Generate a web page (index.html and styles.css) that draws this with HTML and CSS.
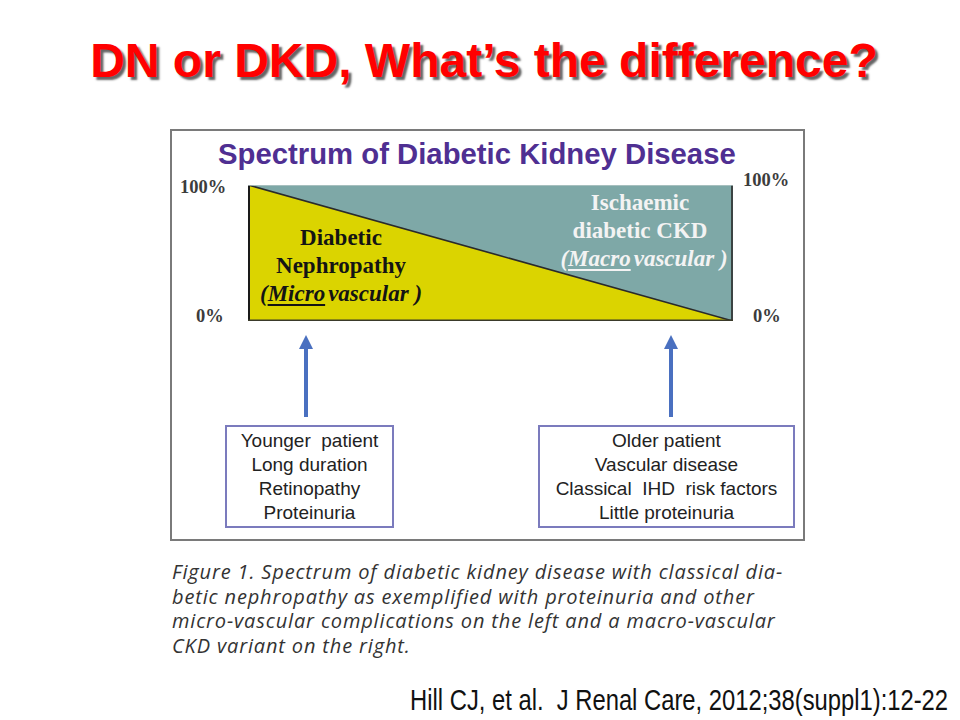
FILE: index.html
```html
<!DOCTYPE html>
<html lang="en">
<head>
<meta charset="utf-8">
<title>DN or DKD, What’s the difference?</title>
<link rel="stylesheet" href="styles.css">
</head>
<body>
<div class="slide">
  <h1 class="title">DN or DKD, What’s the difference?</h1>

  <div class="figure">
    <div class="fig-title">Spectrum of Diabetic Kidney Disease</div>

    <div class="chart-row">
      <div class="axis axis-left">
        <span class="pct pct-top">100%</span>
        <span class="pct pct-bottom">0%</span>
      </div>
      <div class="chart">
        <svg class="chart-svg" width="485" height="136" viewBox="0 0 485 136">
          <polygon points="0,0 485,0 485,136" fill="#7ea8a7"/>
          <polygon points="0,0 0,136 485,136" fill="#dbd400"/>
          <line x1="0" y1="0" x2="485" y2="136" stroke="#2a2a2a" stroke-width="1.6"/>
          <line x1="1" y1="0" x2="1" y2="136" stroke="#1a1a1a" stroke-width="2"/>
          <line x1="484" y1="0" x2="484" y2="136" stroke="#2a2a2a" stroke-width="1.6"/>
          <line x1="0" y1="135.3" x2="485" y2="135.3" stroke="#3a3a2a" stroke-width="1.4"/>
          <line x1="0" y1="0.4" x2="485" y2="0.4" stroke="#b8c8c8" stroke-width="0.8"/>
        </svg>
        <div class="lbl lbl-left">
          <div>Diabetic</div>
          <div>Nephropathy</div>
          <div class="it">(<u>Micro</u>vascular )</div>
        </div>
        <div class="lbl lbl-right">
          <div>Ischaemic</div>
          <div>diabetic CKD</div>
          <div class="it it-shift">(<u>Macro</u>vascular )</div>
        </div>
      </div>
      <div class="axis axis-right">
        <span class="pct pct-top">100%</span>
        <span class="pct pct-bottom">0%</span>
      </div>
    </div>

    <div class="cols">
      <div class="col col-left">
        <svg class="arrow" width="20" height="104" viewBox="0 0 20 104">
          <polygon points="10,14 3,28 17,28" fill="#4a70c0"/>
          <rect x="8" y="26" width="4" height="70" fill="#4a70c0"/>
        </svg>
        <div class="box">
          <div>Younger&nbsp; patient</div>
          <div>Long duration</div>
          <div>Retinopathy</div>
          <div>Proteinuria</div>
        </div>
      </div>
      <div class="col col-right">
        <svg class="arrow" width="20" height="104" viewBox="0 0 20 104">
          <polygon points="10,14 3,28 17,28" fill="#4a70c0"/>
          <rect x="8" y="26" width="4" height="70" fill="#4a70c0"/>
        </svg>
        <div class="box">
          <div>Older patient</div>
          <div>Vascular disease</div>
          <div>Classical&nbsp; IHD&nbsp; risk factors</div>
          <div>Little proteinuria</div>
        </div>
      </div>
    </div>
  </div>

  <p class="caption">Figure 1. Spectrum of diabetic kidney disease with classical dia-<br>betic nephropathy as exemplified with proteinuria and other<br>micro-vascular complications on the left and a macro-vascular<br>CKD variant on the right.</p>

  <p class="cite"><span class="cite-text">Hill CJ, et al.&nbsp; J Renal Care, 2012;38(suppl1):12-22</span></p>
</div>
</body>
</html>
```

FILE: styles.css
```css
html, body {
  margin: 0;
  padding: 0;
  background: #ffffff;
}

.slide {
  width: 960px;
  height: 720px;
  overflow: hidden;
  display: flex;
  flex-direction: column;
  background: #ffffff;
}

.title {
  margin: 33px 0 0 0;
  font-family: "Liberation Sans", Arial, sans-serif;
  font-weight: bold;
  font-size: 48px;
  line-height: 56px;
  color: #ff0000;
  text-align: center;
  padding-left: 8px;
  text-shadow: 3px 3px 2px rgba(50, 50, 50, 0.75);
}

.figure {
  margin: 40px 0 0 170px;
  width: 631px;
  height: 408px;
  border: 2px solid #7a7a7a;
  background: #ffffff;
  display: flex;
  flex-direction: column;
}

.fig-title {
  padding: 6px 0 0 46px;
  font-family: "Liberation Sans", Arial, sans-serif;
  font-weight: bold;
  font-size: 29.3px;
  line-height: 34px;
  color: #4f2f92;
}

.chart-row {
  display: grid;
  grid-template-columns: 76px 485px 1fr;
  height: 150px;
}

.axis {
  display: flex;
  flex-direction: column;
  font-family: "Liberation Serif", "Times New Roman", serif;
  font-weight: bold;
  font-size: 18.5px;
  line-height: 20px;
  color: #3c3c3c;
}

.axis-left .pct-top {
  margin-top: 6px;
  padding-left: 8px;
}

.axis-left .pct-bottom {
  margin-top: auto;
  margin-bottom: -5px;
  padding-left: 24px;
}

.axis-right .pct-top {
  margin-top: -1px;
  padding-left: 10px;
}

.axis-right .pct-bottom {
  margin-top: auto;
  margin-bottom: -5px;
  padding-left: 20px;
}

.chart {
  position: relative;
  margin-top: 14px;
  width: 485px;
  height: 136px;
}

.chart-svg {
  display: block;
}

.lbl {
  position: absolute;
  font-family: "Liberation Serif", "Times New Roman", serif;
  font-weight: bold;
  font-size: 23px;
  line-height: 28px;
  text-align: center;
}

.lbl .it {
  font-style: italic;
}

.lbl .it-shift {
  padding-left: 8px;
}

.lbl u {
  text-decoration-thickness: 2px;
  text-underline-offset: 3px;
  margin-right: 3px;
}

.lbl-left {
  left: 0;
  top: 39px;
  width: 186px;
  color: #141414;
}

.lbl-right {
  left: 292px;
  top: 4px;
  width: 200px;
  color: #f3f3f3;
}

.cols {
  display: flex;
  padding-left: 53px;
  gap: 144px;
}

.col {
  display: flex;
  flex-direction: column;
  align-items: center;
}

.col-left {
  width: 169px;
}

.col-right {
  width: 257px;
}

.arrow {
  display: block;
}

.col-left .arrow {
  margin-left: -7px;
}

.col-right .arrow {
  margin-left: 9px;
}

.box {
  align-self: stretch;
  border: 2px solid #7b7bbd;
  padding: 2px 0 1px 0;
  font-family: "Liberation Sans", Arial, sans-serif;
  font-size: 19px;
  line-height: 24px;
  color: #222222;
  text-align: center;
}

.caption {
  margin: 19px 0 0 172px;
  font-family: "Open Sans", "Noto Sans", sans-serif;
  font-style: italic;
  font-size: 20px;
  letter-spacing: 0.85px;
  line-height: 24.5px;
  color: #333333;
}

.cite {
  margin: 26px 12px 0 0;
  text-align: right;
  font-family: "Liberation Sans", Arial, sans-serif;
  font-size: 29px;
  line-height: 32px;
  color: #111111;
}

.cite-text {
  display: inline-block;
  transform: scaleX(0.82);
  transform-origin: right center;
  white-space: nowrap;
}
```
